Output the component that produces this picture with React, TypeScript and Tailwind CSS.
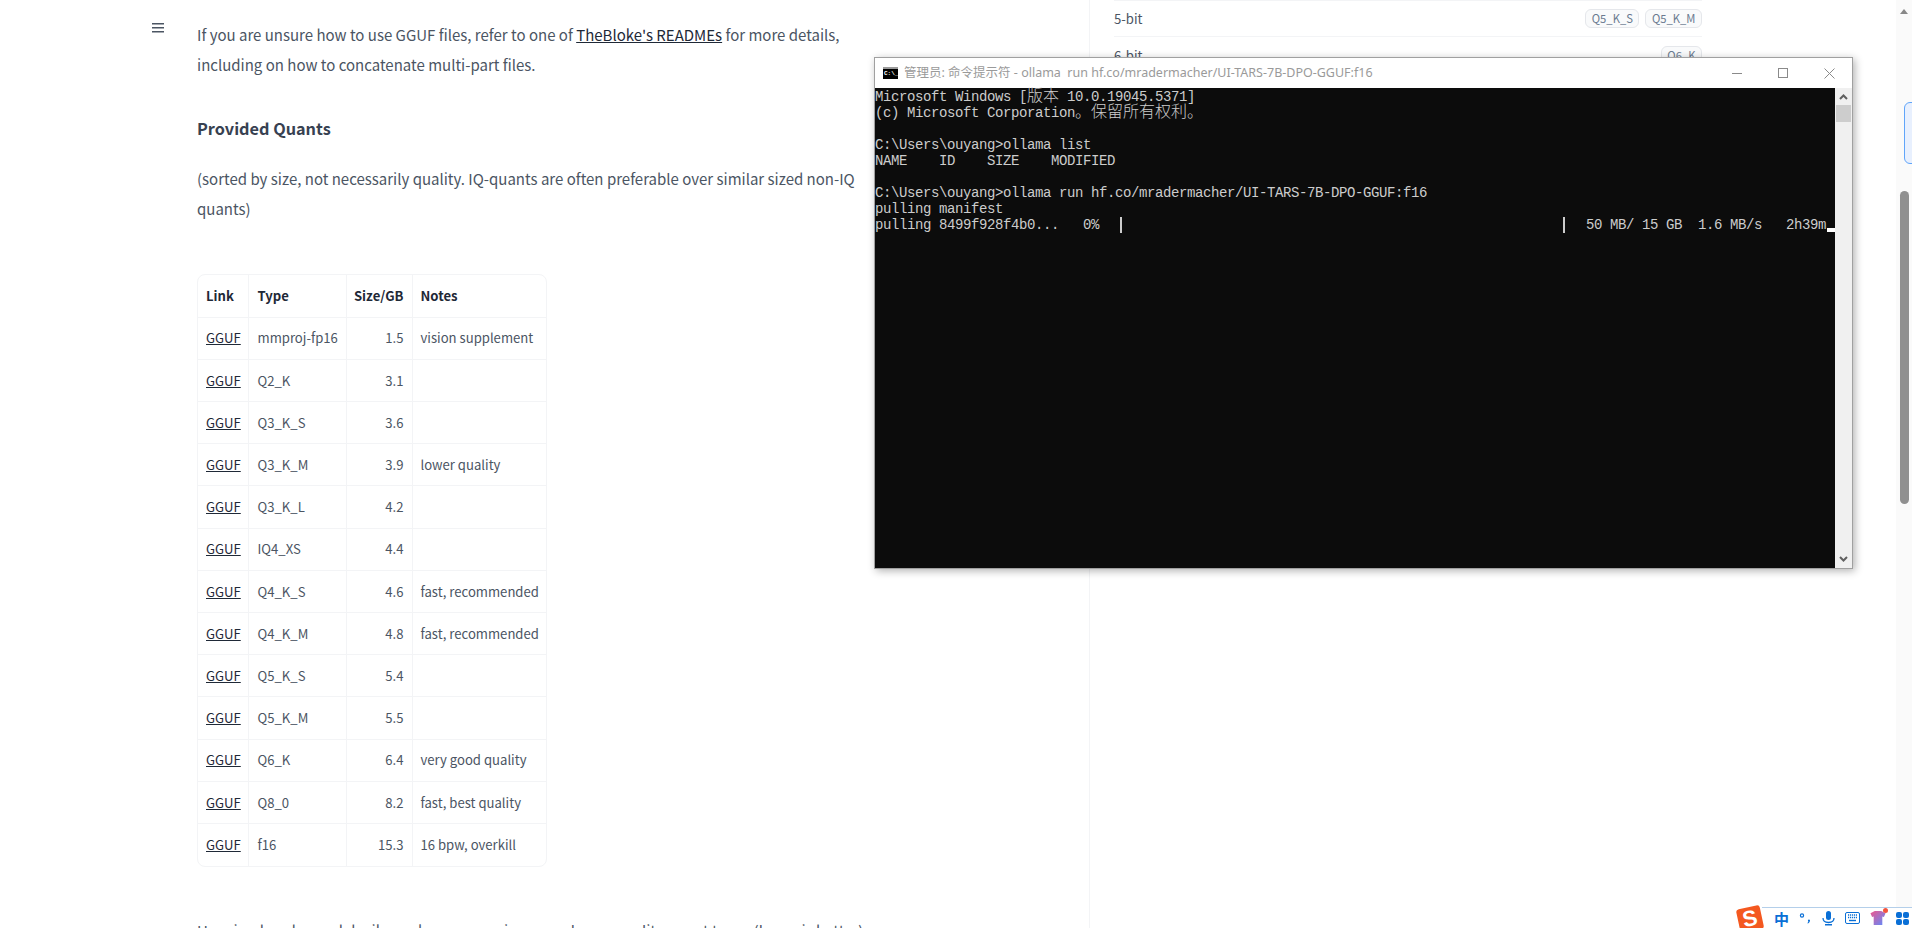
import React from "react";

const rows = [
  ["mmproj-fp16", "1.5", "vision supplement"],
  ["Q2_K", "3.1", ""],
  ["Q3_K_S", "3.6", ""],
  ["Q3_K_M", "3.9", "lower quality"],
  ["Q3_K_L", "4.2", ""],
  ["IQ4_XS", "4.4", ""],
  ["Q4_K_S", "4.6", "fast, recommended"],
  ["Q4_K_M", "4.8", "fast, recommended"],
  ["Q5_K_S", "5.4", ""],
  ["Q5_K_M", "5.5", ""],
  ["Q6_K", "6.4", "very good quality"],
  ["Q8_0", "8.2", "fast, best quality"],
  ["f16", "15.3", "16 bpw, overkill"],
];

const Cjk = ({ children }: { children: React.ReactNode }) => (
  <span className="font-['Noto_Sans_CJK_SC',sans-serif] text-[16px] leading-[10px] tracking-normal font-extralight">{children}</span>
);

const QuantBadge = ({ label }: { label: string }) => (
  <span className="h-[19px] px-[5.5px] flex items-center rounded-md border border-[#e5e7eb] bg-[#f9fafb] text-[11.25px] text-[#6b7a90]">
    {label}
  </span>
);

const ReadmeTable = () => (
  <div className="mt-[51px] w-[350px] rounded-lg border border-[#f3f4f6] overflow-hidden">
    <table className="w-full border-collapse text-[13.125px] table-fixed">
      <colgroup>
        <col className="w-[50px]" />
        <col className="w-[98px]" />
        <col className="w-[66px]" />
        <col />
      </colgroup>
      <thead>
        <tr className="h-[42px] font-semibold text-[#1f2937]">
          <th className="pl-[8px] text-left font-semibold">Link</th>
          <th className="pl-[9px] text-left font-semibold border-l border-[#f3f4f6]">Type</th>
          <th className="pr-[8px] text-right font-semibold border-l border-[#f3f4f6]">Size/GB</th>
          <th className="pl-[8px] text-left font-semibold border-l border-[#f3f4f6]">Notes</th>
        </tr>
      </thead>
      <tbody>
        {rows.map((row) => (
          <tr key={row[0]} className="h-[42.2px] border-t border-[#f3f4f6]">
            <td className="pl-[8px] text-[#1f2937] underline">GGUF</td>
            <td className="pl-[9px] border-l border-[#f3f4f6]">{row[0]}</td>
            <td className="pr-[8px] text-right border-l border-[#f3f4f6]">{row[1]}</td>
            <td className="pl-[8px] border-l border-[#f3f4f6]">{row[2]}</td>
          </tr>
        ))}
      </tbody>
    </table>
  </div>
);

const TerminalWindow = () => (
  <div className="absolute left-[874px] top-[57px] w-[979px] h-[512px] flex flex-col border border-[#a0a0a0] bg-white shadow-[2px_2px_8px_rgba(0,0,0,0.3)]">
    <div className="h-[30px] shrink-0 flex items-center">
      <div className="ml-[8px] w-[15px] h-[12px] bg-black border-t-2 border-[#9a9a9a] flex items-center justify-start pl-[1px]">
        <span className="font-['Liberation_Mono',monospace] text-[6px] leading-none text-white font-bold">C:\_</span>
      </div>
      <span className="ml-[6px] font-['Noto_Sans','Noto_Sans_CJK_SC',sans-serif] text-[12.5px] text-[#9a9a9a] whitespace-pre">
        管理员: 命令提示符 - ollama  run hf.co/mradermacher/UI-TARS-7B-DPO-GGUF:f16
      </span>
      <div className="ml-auto flex items-center">
        <div className="w-[46px] flex justify-center"><div className="w-[10px] h-px bg-[#8a8a8a]" /></div>
        <div className="w-[46px] flex justify-center"><div className="w-[10px] h-[10px] border border-[#8a8a8a]" /></div>
        <div className="w-[46px] flex justify-center text-[#8a8a8a]">
          <svg width="11" height="11" viewBox="0 0 11 11" stroke="currentColor" strokeWidth="1"><path d="M0.5 0.5l10 10M10.5 0.5l-10 10" /></svg>
        </div>
      </div>
    </div>
    <div className="flex-1 flex min-h-0">
      <div className="flex-1 bg-[#0c0c0c] text-[#cccccc] pt-px font-['Liberation_Mono',monospace] text-[14px] leading-[16px] tracking-[-0.4px] whitespace-pre relative">
        <div className="h-[16px]">Microsoft Windows [<Cjk>版本</Cjk> 10.0.19045.5371]</div>
        <div className="h-[16px]">(c) Microsoft Corporation<Cjk>。保留所有权利。</Cjk></div>
        <div className="h-[16px]" />
        <div className="h-[16px]">{"C:\\Users\\ouyang>ollama list"}</div>
        <div className="h-[16px]">NAME    ID    SIZE    MODIFIED</div>
        <div className="h-[16px]" />
        <div className="h-[16px]">{"C:\\Users\\ouyang>ollama run hf.co/mradermacher/UI-TARS-7B-DPO-GGUF:f16"}</div>
        <div className="h-[16px]">pulling manifest</div>
        <div className="h-[16px] flex">
          <span className="w-[245px]">pulling 8499f928f4b0...   0%</span>
          <span className="w-[2px] bg-[#cccccc]" />
          <span className="w-[441px]" />
          <span className="w-[2px] bg-[#cccccc]" />
          <span className="ml-[21px]">50 MB/ 15 GB  1.6 MB/s   2h39m</span>
          <span className="ml-auto mt-[11px] w-[8px] h-[4px] bg-white" />
        </div>
      </div>
      <div className="w-[17px] bg-[#f0f0f0] flex flex-col items-center">
        <svg width="9" height="6" viewBox="0 0 9 6" className="mt-[6px]" fill="none" stroke="#606060" strokeWidth="2"><path d="M1 5l3.5-3.5L8 5" /></svg>
        <div className="mt-[5px] w-[15px] h-[17px] bg-[#cdcdcd]" />
        <svg width="9" height="6" viewBox="0 0 9 6" className="mt-auto mb-[6px]" fill="none" stroke="#606060" strokeWidth="2"><path d="M1 1l3.5 3.5L8 1" /></svg>
      </div>
    </div>
  </div>
);

const ImeBar = () => (
  <div className="absolute right-0 bottom-0 w-[174px] h-[26px] flex items-end">
    <div className="relative z-10 w-[24px] h-[24px] -rotate-12 rounded-[3px] bg-[#f4581f] flex items-center justify-center font-['Liberation_Sans',sans-serif] font-bold text-[22px] leading-none text-white translate-y-[3px]">
      S
    </div>
    <div className="flex-1 h-[21px] border-t border-[#b4cfea] bg-white flex items-center gap-[10px] pl-[12px] text-[#0a6fd6]">
      <span className="font-['Noto_Sans_CJK_SC',sans-serif] font-bold text-[15px] leading-none">中</span>
      <svg width="13" height="13" viewBox="0 0 13 13" fill="currentColor"><circle cx="3" cy="3.5" r="1.6" fill="none" stroke="currentColor" strokeWidth="1.2" /><path d="M9.5 7.5c1.5-.3 2 1 1 2.5-.4.7-1 1.200-1.700 1.500l-.4-.5c.5-.4.900-.9 1-1.500-.8-.4-.6-1.800.5-2z" /></svg>
      <svg width="13" height="15" viewBox="0 0 13 15" fill="currentColor"><rect x="4" y="0" width="5" height="9" rx="2.500" /><path d="M1 7c0 3 2.500 4.500 5.500 4.500S12 10 12 7" fill="none" stroke="currentColor" strokeWidth="1.300" /><rect x="3" y="13" width="7" height="1.500" /></svg>
      <svg width="15" height="12" viewBox="0 0 15 12"><rect x="0.500" y="0.500" width="14" height="11" rx="1.500" fill="none" stroke="currentColor" /><path d="M3 3h9M3 5.500h9" stroke="currentColor" strokeWidth="1.400" strokeDasharray="1.200 .8" /><path d="M4 8.500h7" stroke="currentColor" strokeWidth="1.400" /></svg>
      <div className="relative">
        <svg width="16" height="14" viewBox="0 0 14 13">
          <defs>
            <linearGradient id="shirt" x1="0" y1="0" x2="1" y2="1">
              <stop offset="0" stopColor="#f0568c" />
              <stop offset="1" stopColor="#5b8cff" />
            </linearGradient>
          </defs>
          <path d="M0 2l4-2h6l4 2-1.500 3.500-1.500-.5V13H3V5l-1.500.5z" fill="url(#shirt)" />
        </svg>
        <span className="absolute -top-[3px] -right-[2px] w-[5px] h-[5px] rounded-full bg-[#f4533c]" />
      </div>
      <div className="grid grid-cols-2 gap-px w-[13px] h-[13px]">
        <span className="rounded-[2px] bg-[#0a6fd6]" />
        <span className="rounded-[2px] bg-[#0a6fd6]" />
        <span className="rounded-[2px] bg-[#0a6fd6]" />
        <span className="rounded-[2px] bg-[#0a6fd6]" />
      </div>
    </div>
  </div>
);

export default function App() {
  return (
    <div className="relative flex h-[928px] overflow-hidden bg-white font-['Noto_Sans_CJK_SC',sans-serif] text-[#4b5563]">
      <div className="w-[152px] shrink-0" />
      <div className="w-[45px] shrink-0 pt-[23px]">
        <svg width="12" height="10" viewBox="0 0 12 10" fill="#4b5563">
          <rect width="12" height="1.500" y="0" />
          <rect width="12" height="1.500" y="4" />
          <rect width="12" height="1.500" y="8" />
        </svg>
      </div>

      <main className="w-[892px] shrink-0 pt-[20px] text-[15px]">
        <p className="leading-[30px]">
          If you are unsure how to use GGUF files, refer to one of{" "}
          <span className="text-[#1f2937] underline">TheBloke's READMEs</span> for more details,
          <br />
          including on how to concatenate multi-part files.
        </p>
        <h2 className="mt-[33px] text-[16.25px] leading-[30px] font-semibold text-[#374151]">Provided Quants</h2>
        <p className="mt-[21px] leading-[29.6px]">
          (sorted by size, not necessarily quality. IQ-quants are often preferable over similar sized non-IQ
          <br />
          quants)
        </p>
        <ReadmeTable />
        <p className="mt-[49px] leading-[30px]">
          Here is a handy graph by ikawrakow comparing some lower-quality quant types (lower is better):
        </p>
      </main>

      <aside className="w-[807px] shrink-0 border-l border-[#f3f4f6] pl-[24px] text-[13.125px]">
        <div className="w-[588px]">
          <div className="h-[37px] border-t border-b border-[#f3f4f6] flex items-center justify-between">
            <span>5-bit</span>
            <div className="flex gap-[6px]">
              <QuantBadge label="Q5_K_S" />
              <QuantBadge label="Q5_K_M" />
            </div>
          </div>
          <div className="h-[37px] flex items-center justify-between">
            <span>6-bit</span>
            <QuantBadge label="Q6_K" />
          </div>
        </div>
      </aside>

      <div className="w-[16px] shrink-0 bg-[#fafafa] flex flex-col items-center">
        <div className="mt-[9px] w-0 h-0 border-x-[4px] border-x-transparent border-b-[5px] border-b-[#888888]" />
        <div className="mt-[177px] w-[9px] h-[313px] rounded-full bg-[#909090]" />
      </div>

      <div className="absolute left-[1904px] top-[102px] w-[10px] h-[62px] rounded-l-md border border-[#60a5fa] bg-[#e8f0fe]" />
      <TerminalWindow />
      <ImeBar />
    </div>
  );
}
